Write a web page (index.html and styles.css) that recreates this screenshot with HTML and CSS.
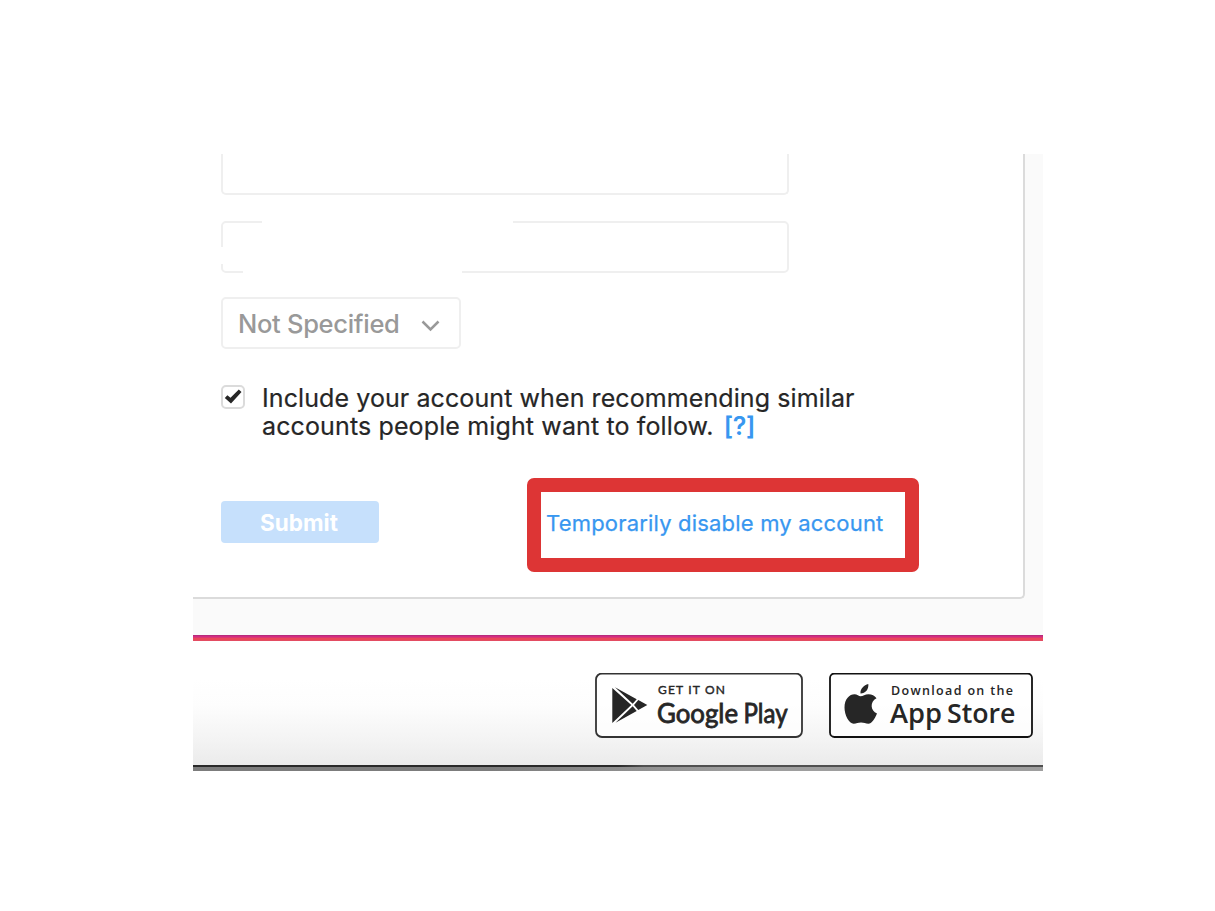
FILE: index.html
```html
<!DOCTYPE html>
<html lang="en">
<head>
<meta charset="utf-8">
<title>Edit profile</title>
<link rel="stylesheet" href="styles.css">
</head>
<body>
<main class="shot">
  <section class="page">
    <form class="card">
      <div class="field field-cut"></div>
      <div class="field field-full">
        <i class="gap gap-top"></i><i class="gap gap-left"></i><i class="gap gap-bottom"></i>
      </div>
      <div class="select"><span class="select-text">Not Specified</span>
        <svg class="chevron" width="20" height="14" viewBox="0 0 20 14"><path d="M1.500 2.500 9.500 10.500 17.500 2.500" fill="none" stroke="#999" stroke-width="2.5"/></svg>
      </div>
      <div class="option">
        <span class="check"><svg width="20" height="20" viewBox="0 0 20 20"><path d="M1.8 11 4.4 8.2 7.5 10.8 15.8 2.4 18.5 5 8 16.4Z" fill="#262626"/></svg></span>
        <p class="option-text"><span class="line1">Include your account when recommending similar</span><br><span class="line2">accounts people might want to follow.</span><a class="help">[?]</a></p>
      </div>
      <div class="actions">
        <span class="submit">Submit</span>
        <div class="highlight"><a class="disable">Temporarily disable my account</a></div>
      </div>
    </form>
  </section>
  <div class="stripe"></div>
  <footer class="footer">
    <svg class="google" width="208" height="65" viewBox="0 0 208 65">
      <rect x="1" y=".5" width="206" height="63.500" rx="6" fill="#fff" fill-opacity=".75" stroke="#333" stroke-width="1.8"/>
      <path d="M17.300 15V50L36.300 32ZM20 14.300 37.700 30.700 41.700 26.300ZM43.300 27 39 32 43.300 37 52.300 32ZM37.700 33.300 20.500 49.700 41.700 37.900Z" fill="#262626"/>
      <text class="get" x="63" y="21" textLength="67">GET IT ON</text>
      <text class="play" x="62" y="49.500" textLength="81" lengthAdjust="spacingAndGlyphs">Google</text>
      <text class="play" x="148.500" y="49.500" textLength="44" lengthAdjust="spacingAndGlyphs">Play</text>
    </svg>
    <svg class="apple" width="204" height="65" viewBox="0 0 204 65">
      <rect x="1" y=".5" width="202" height="63.500" rx="4.500" fill="#fff" fill-opacity=".75" stroke="#111" stroke-width="1.8"/>
      <path d="M39.300 11C40 16 36.500 20.500 31.500 20.500 31 16 35 12 39.300 11ZM31.500 23.300C34 23.300 36 21.300 39.500 21.300 43 21.300 45.500 22.800 47.500 25.300 40.500 29 41.500 38 48 40.500 45.700 46 42.500 50.700 39.500 50.700 36.500 50.700 35 49.500 32 49.500 29 49.500 27.500 50.700 24.700 50.700 20 50.700 15.500 42 15.500 34.500 15.500 26 20.500 21.300 25.500 21.300 28 21.300 30 23.300 31.500 23.300Z" fill="#262626"/>
      <text class="download" x="62" y="22" textLength="122">Download on the</text>
      <text class="store" x="61" y="50" textLength="52" lengthAdjust="spacingAndGlyphs">App</text>
      <text class="store" x="118" y="50" textLength="68.500" lengthAdjust="spacingAndGlyphs">Store</text>
    </svg>
  </footer>
  <div class="edge"></div>
  <div class="base"></div>
</main>
</body>
</html>
```
FILE: styles.css
```css
* { box-sizing: border-box; }
body { margin: 0; padding: 154px 172px 0 193px; background: #fff; font-family: Inter, "Liberation Sans", sans-serif; }
.shot { width: 850px; height: 617px; overflow: hidden; }
.page { height: 481px; background: #fafafa; }
.card { width: 832px; height: 445px; padding-left: 28px; background: #fff; border: solid #dbdbdb; border-width: 0 2px 2px 0; border-radius: 0 0 5px 0; }
.field { width: 568px; border: 2px solid #efefef; border-radius: 5px; }
.field-cut { height: 41px; border-top: 0; border-radius: 0 0 5px 5px; }
.field-full { position: relative; height: 52px; margin-top: 26px; }
.gap { position: absolute; background: #fff; }
.gap-top { left: 39px; top: -2px; width: 251px; height: 2px; }
.gap-left { left: -2px; top: 24px; width: 2px; height: 17px; }
.gap-bottom { left: 20px; bottom: -2px; width: 219px; height: 2px; }
.select { display: flex; align-items: center; width: 240px; height: 52px; margin-top: 24px; padding: 0 18px 0 15px; border: 2px solid #efefef; border-radius: 5px; color: #999; font-size: 25.5px; font-weight: 500; letter-spacing: -.3px; justify-content: space-between; white-space: nowrap; }
.chevron { margin-top: 6px; }
.option { display: flex; height: 56px; margin-top: 35px; }
.check { display: flex; width: 24px; height: 24px; margin: 1px 17px 0 0; border: 2px solid #dbdbdb; border-radius: 5px; }
.option-text { margin: 0; color: #262626; font-size: 25px; line-height: 28px; letter-spacing: .09px; -webkit-text-stroke: .2px #262626; white-space: nowrap; }
.line2 { letter-spacing: .13px; }
.help { margin-left: 10px; color: #3897f0; font-weight: 600; letter-spacing: -.3px; -webkit-text-stroke: 0; }
.actions { display: flex; height: 93px; margin-top: 38px; }
.submit { width: 158px; height: 42px; margin-top: 23px; padding-right: 2px; border-radius: 4px; background: #c6e0fc; color: #fff; font-size: 22.5px; font-weight: 700; line-height: 44px; text-align: center; }
.highlight { width: 392px; height: 93.5px; margin-left: 148px; padding: 17px 0 0 5px; border: 14px solid #dd3535; border-radius: 7px; white-space: nowrap; }
.disable { display: block; color: #3897f0; font-size: 22px; line-height: 28px; letter-spacing: .19px; -webkit-text-stroke: .25px #3897f0; }
.stripe { height: 6px; background: linear-gradient(#b72b7a 0 1px, #d02c84 1px 2px, #dc3773 2px 3px, #e9475a 3px 5px, #e34c62 5px); }
.footer { display: flex; height: 124px; padding: 32px 0 0 402px; gap: 26px; background: linear-gradient(#fff 30%, #fdfdfd 52%, #f4f4f4 78%, #ebebeb); }
.google, .apple { flex: none; }
.google text, .apple text { fill: #262626; }
.get { font: 400 12px Lato, sans-serif; stroke: #262626; stroke-width: .4px; }
.play { font: 400 26px Lato, sans-serif; stroke: #262626; stroke-width: .8px; }
.download { font: 600 12.5px "Open Sans", sans-serif; }
.store { font: 600 27.5px "Open Sans", sans-serif; }
.edge { height: 2px; background: linear-gradient(90deg, #292929 0 50%, #505050 53%); }
.base { height: 4px; background: linear-gradient(90deg, #7c7c7c 35%, #9e9e9e 65%); }
```
